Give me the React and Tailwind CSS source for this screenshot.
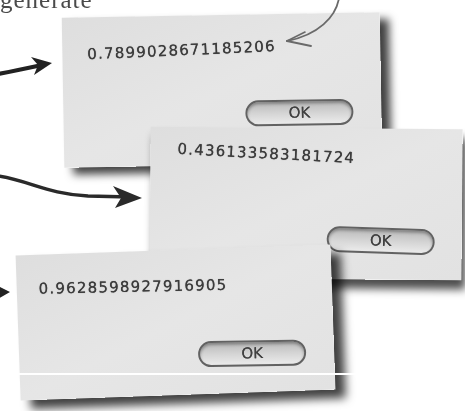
import React from "react";

function OkButton() {
  return (
    <div className="flex h-[26px] w-[108px] items-center justify-center rounded-full border-2 border-[#626262] bg-gradient-to-b from-[#b9b9b9] via-[#d4d4d4] to-[#ebebeb] shadow-[inset_0_2px_3px_rgba(0,0,0,0.3)]">
      <span className="text-[15px] leading-none text-[#404040] [font-family:'DejaVu_Sans',sans-serif] [text-shadow:0_0_0.6px_#404040]">OK</span>
    </div>
  );
}

function Dialog({ value, className, textClass, btnClass }) {
  return (
    <div className={"absolute flex flex-col bg-gradient-to-br from-[#dedede] via-[#e6e6e6] to-[#e2e2e2] " + className}>
      <div className={"text-[15px] leading-none tracking-[1.2px] text-[#3c3c3c] [font-family:'DejaVu_Sans',sans-serif] [text-shadow:0_0_0.7px_#3c3c3c] " + textClass}>
        {value}
      </div>
      <div className={"mt-auto self-end " + btnClass}>
        <OkButton />
      </div>
    </div>
  );
}

export default function App() {
  return (
    <div className="relative h-[411px] w-[465px] overflow-hidden bg-white blur-[0.35px]">
      <div className="absolute left-0 top-[-19px] text-[25px] tracking-[1px] text-[#4a4a4a] [font-family:'Liberation_Serif',serif]">
        generate
      </div>

      <Dialog
        value="0.7899028671185206"
        className="left-[63px] top-[15px] h-[150px] w-[318px] -rotate-1 pl-[25px] pr-[28px] pt-[30px] pb-[38px] shadow-[9px_7px_9px_rgba(0,0,0,0.75)]"
        textClass="-rotate-[1.5deg] origin-left"
        btnClass=""
      />

      <Dialog
        value="0.436133583181724"
        className="left-[150px] top-[128px] h-[151px] w-[312px] rotate-[0.5deg] pl-[27px] pr-[27px] pt-[15px] pb-[26px] shadow-[4px_9px_9px_rgba(0,0,0,0.7)]"
        textClass="rotate-[2.5deg] origin-left"
        btnClass="rotate-[1.5deg]"
      />

      <Dialog
        value="0.9628598927916905"
        className="left-[18px] top-[250px] h-[145px] w-[315px] -rotate-2 pl-[22px] pr-[28px] pt-[27px] pb-[26px] shadow-[10px_9px_10px_rgba(0,0,0,0.75)]"
        textClass="rotate-[0.8deg] origin-left"
        btnClass="rotate-1"
      />

      <div className="absolute left-0 top-[373px] h-[2px] w-[362px] bg-white" />

      <svg className="pointer-events-none absolute left-0 top-0" width="465" height="411" viewBox="0 0 465 411">
        <path d="M-2 74 C 14 71, 28 68, 42 65" stroke="#222" strokeWidth="4" fill="none" strokeLinecap="round" />
        <polygon points="52,63 31,57 38,65 34,75" fill="#222" />

        <path d="M-2 176 C 30 181, 48 194, 88 196 L 130 197" stroke="#2a2a2a" strokeWidth="3.5" fill="none" strokeLinecap="round" />
        <polygon points="142,198 113,186 121,198 115,208" fill="#2a2a2a" />

        <polygon points="10,292 -4,285 0,292 -4,300" fill="#222" />

        <path d="M339 -2 C 336 17, 318 35, 287 41" stroke="#6a6a6a" strokeWidth="1.8" fill="none" strokeLinecap="round" />
        <path d="M287 41 L 311 46" stroke="#6a6a6a" strokeWidth="1.8" fill="none" strokeLinecap="round" />
        <path d="M287 41 L 305 32" stroke="#6a6a6a" strokeWidth="1.6" fill="none" strokeLinecap="round" />
      </svg>
    </div>
  );
}
